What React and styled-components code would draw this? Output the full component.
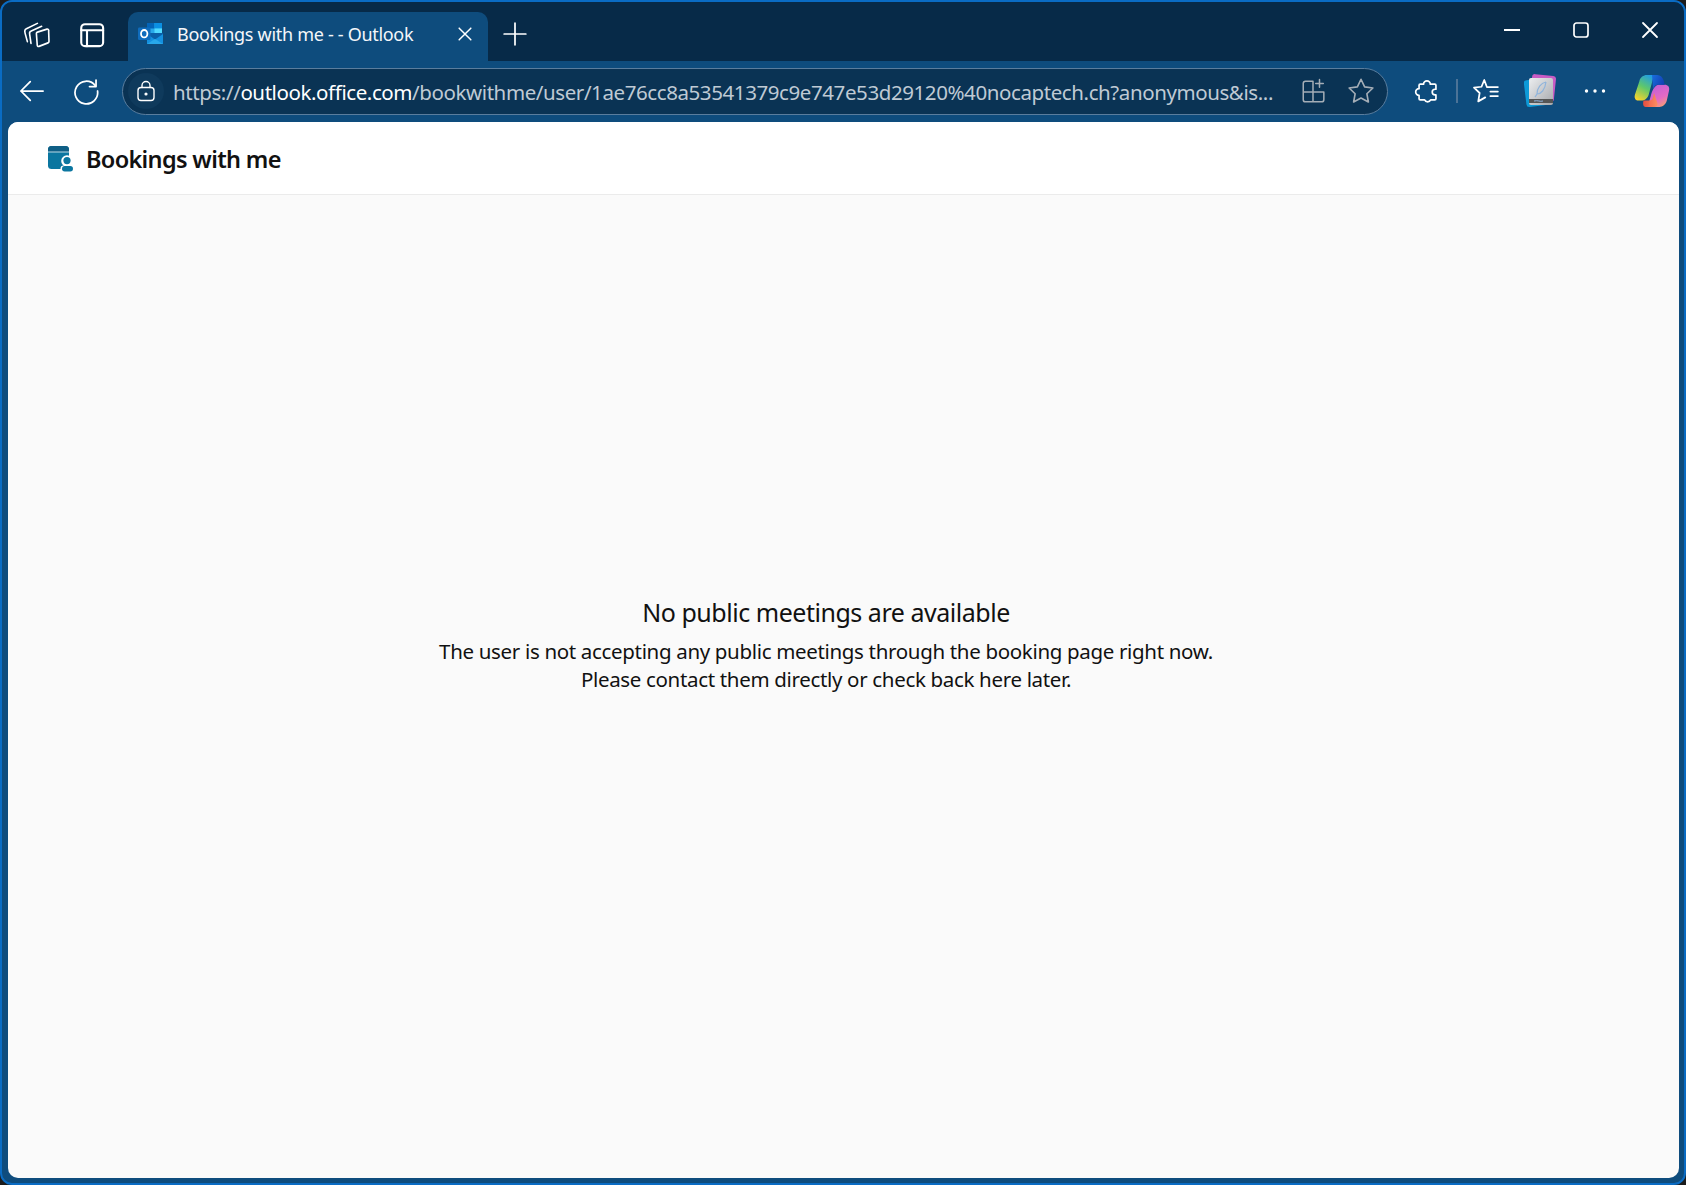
import React from "react";
import styled, { createGlobalStyle } from "styled-components";

const Global = createGlobalStyle`
  html, body { margin: 0; padding: 0; background: #1c1c1c; }
  * { box-sizing: border-box; }
  body { font-family: "Noto Sans", "Open Sans", sans-serif; }
`;

const Win = styled.div`
  width: 1686px; height: 1185px; border: 2px solid #0a6cc4; border-radius: 12px;
  background: #0e4c7d; display: flex; flex-direction: column; overflow: hidden;
`;
const TabStrip = styled.div`
  height: 59px; background: #072a48; display: flex; align-items: flex-end; padding-left: 8px;
  flex: none;
`;
const StripBtn = styled.div`
  width: 54px; height: 49px; padding-bottom: 5px; display: flex; align-items: center; justify-content: center; color: #fff; flex: none;
`;
const Tab = styled.div`
  width: 360px; height: 49px; margin-left: 10px; background: #0e4c7d; border-radius: 10px 10px 0 0;
  display: flex; align-items: center; padding: 0 13px 5px 10px; color: #fff; flex: none;
`;
const TabTitle = styled.div`
  flex: 1; margin-left: 13px; font-size: 18px; letter-spacing: -0.3px; white-space: nowrap; color: #f4f7fa;
`;
const Spacer = styled.div` flex: 1; `;
const WinControls = styled.div`
  display: flex; align-self: stretch; align-items: center; padding-bottom: 3px;
`;
const WinBtn = styled.div`
  width: 69px; display: flex; justify-content: center; color: #fff;
`;
const NavBar = styled.div`
  height: 61px; flex: none; display: flex; align-items: center; padding: 0 6px 1px 3px; color: #fff;
`;
const NavBtn = styled.div`
  width: ${p => p.$w || 54}px; margin-left: ${p => p.$ml || 0}px; height: 44px; display: flex; align-items: center; justify-content: center; flex: none;
`;
const Omni = styled.div`
  width: 1266px; height: 47px; margin-left: 9px; border: 1.5px solid #5a7d9d; border-radius: 24px; background: #0a3354;
  display: flex; align-items: center; padding: 0 2px 0 5px; flex: none;
`;
const LockChip = styled.div`
  width: 36px; height: 36px; border-radius: 50%; background: #0f3a5c; display: flex; align-items: center; justify-content: center; flex: none;
`;
const Url = styled.div`
  flex: 1; min-width: 0; margin-left: 9px; padding-top: 2px; font-size: 20.5px; letter-spacing: -0.41px; white-space: nowrap; color: #bfcad4;
  b { font-weight: 400; color: #fff; }
`;
const OmniBtn = styled.div`
  width: 48px; display: flex; justify-content: center; flex: none; color: #a4adb6;
`;
const Sep = styled.div`
  width: 2px; height: 24px; background: #4c7397; margin: 0 2px 0 1px; flex: none;
`;
const Page = styled.div`
  flex: 1; margin: 0 5px 5px 6px; background: #fafafa; border-radius: 10px; overflow: hidden; display: flex; flex-direction: column;
`;
const AppHeader = styled.header`
  height: 73px; background: #fff; border-bottom: 1.5px solid #ebebeb; display: flex; align-items: center; padding: 2px 0 0 40px; gap: 12px; flex: none;
`;
const AppTitle = styled.div`
  font-size: 23.5px; font-weight: 600; color: #111; letter-spacing: -0.67px;
`;
const Empty = styled.main`
  flex: 1; display: flex; flex-direction: column; align-items: center; padding: 399px 35px 0 0; color: #111;
`;
const Heading = styled.div`
  font-size: 25px; letter-spacing: -0.47px; line-height: 36px; margin-bottom: 7px;
`;
const Para = styled.div`
  font-size: 20.5px; letter-spacing: -0.33px; line-height: 28px; text-align: center;
`;

const Stroke = ({ size = 24, sw = 1.6, children, vb = 24 }) => (
  <svg width={size} height={size} viewBox={`0 0 ${vb} ${vb}`} fill="none" stroke="currentColor" strokeWidth={sw} strokeLinecap="round" strokeLinejoin="round">{children}</svg>
);

const Collections = () => (
  <Stroke size={30} sw={1.3}>
    <path d="M4.300 18.100 2.500 11.500c-.4-1.500-.2-3.300 1-3.700L12.300 3.500" />
    <path d="M7.200 19.500 6.100 12c-.3-1.500.2-2 1.300-2.400L15.700 5.800" />
    <path d="M11.500 11.500c0-.5.300-.9.800-1L20 8.100c.8-.2 1.300.2 1.300 1l.3 8.900c0 .5-.3.900-.8 1.100l-7.200 2.800c-.8.300-1.300-.1-1.400-.9z" />
  </Stroke>
);
const VerticalTabs = () => (
  <Stroke size={30} sw={1.7}><rect x="4.200" y="4.200" width="17.500" height="17.500" rx="3" /><path d="M4.200 9h17.500M8.800 9v12.700" /></Stroke>
);
const OutlookLogo = () => (
  <svg width="26" height="24" viewBox="0 0 26 24">
    <rect x="9" y="1" width="15" height="11" fill="#28a8ea" />
    <rect x="9" y="1" width="7.500" height="5.500" fill="#0364b8" />
    <rect x="16.500" y="1" width="7.500" height="5.500" fill="#0a8fe3" />
    <rect x="16.500" y="6.500" width="7.500" height="5.500" fill="#50d9ff" />
    <path d="M9 12h16v10H9z" fill="#1490df" />
    <path d="M9 12l8 5.500 8-5.500v-1H9z" fill="#0a5fa8" />
    <path d="M9 22l8-5 8 5z" fill="#28a8ea" />
    <rect x="0" y="5.500" width="12.500" height="12.500" rx="1.200" fill="#0f6cbd" />
    <ellipse cx="6.200" cy="11.700" rx="3.200" ry="3.700" fill="none" stroke="#fff" strokeWidth="1.800" />
  </svg>
);
const Close = ({ size = 20, sw = 1.8 }) => (
  <Stroke size={size} sw={sw}><path d="M5 5l14 14M19 5 5 19" /></Stroke>
);
const Plus = () => <Stroke size={26} sw={1.6}><path d="M12 2v20M2 12h20" /></Stroke>;
const Minimize = () => <svg width="16" height="3" viewBox="0 0 16 3"><rect width="16" height="2" fill="#fff" /></svg>;
const Maximize = () => <svg width="16" height="16" viewBox="0 0 16 16" fill="none" stroke="#fff" strokeWidth="1.700"><rect x="1" y="1" width="14" height="14" rx="2.500" /></svg>;
const Back = () => <Stroke size={28} sw={1.5}><path d="M21.500 12H2.500M10.500 4l-8 8 8 8" /></Stroke>;
const Refresh = () => <Stroke size={28} sw={1.5}><path d="M19.800 7.200a9.700 9.700 0 1 0 2.100 4.800" /><path d="M20.600 2.600v5.600H15" /></Stroke>;
const Lock = () => <Stroke size={24} sw={1.4}><rect x="4" y="8.500" width="16" height="13" rx="3" /><path d="M8 8.500V6.500a4 4 0 0 1 8 0v2" /><circle cx="12" cy="15" r=".9" fill="currentColor" /></Stroke>;
const Split = () => <Stroke size={26} sw={1.4}><path d="M12 3H5a2 2 0 0 0-2 2v15a2 2 0 0 0 2 2h15a2 2 0 0 0 2-2v-7H3M12 3v19" /><path d="M18 1.500v7M14.500 5h7" /></Stroke>;
const Star = () => <Stroke size={30} sw={1.300}><path d="M12 2.600l2.900 6.100 6.600.9-4.800 4.600 1.200 6.600L12 17.600l-5.900 3.200 1.200-6.600-4.800-4.600 6.600-.9z" /></Stroke>;
const Puzzle = () => <Stroke size={27} sw={1.500}><path d="M11.500 2.500a3 3 0 0 1 3 3h4a1 1 0 0 1 1 1v3.500h-.8a2.500 2.500 0 0 0 0 5h.8v3.500a1 1 0 0 1-1 1h-3.700a3 3 0 0 1-5.400 0H5.500a1 1 0 0 1-1-1V15.500a3 3 0 0 1 0-6V6.500a1 1 0 0 1 1-1h3a3 3 0 0 1 3-3z" /></Stroke>;
const Favorites = () => <Stroke size={30} sw={1.400}><path d="M21.500 8.800h-8.800L10.600 3.200 8.400 8.600l-6 .7 4.500 4.300-1.100 6.700 5.600-3.200" /><path d="M15.500 12.400h6M15.500 16h6" /></Stroke>;
const BookApp = () => (
  <svg width="32" height="34" viewBox="0 0 32 34">
    <defs><linearGradient id="bk" x1="0" y1="0" x2="1" y2="1"><stop offset="0" stopColor="#eceef0" /><stop offset="1" stopColor="#a6a8ac" /></linearGradient></defs>
    <rect x="7" y="1" width="24" height="26" rx="3" fill="#c85cc4" transform="rotate(6 19 14)" />
    <rect x="1" y="5" width="24" height="27" rx="3" fill="#0d9ad8" transform="rotate(-7 13 18)" />
    <rect x="5" y="4" width="24" height="27" rx="2" fill="url(#bk)" />
    <rect x="5" y="25" width="24" height="4" fill="#555" />
    <path d="M22 8c-5 1-9 6-9 12l-2 3M13 20c4 0 8-4 9-12" stroke="#8fb4dc" strokeWidth="1.200" fill="none" />
    <path d="M10 27c4-1 6 1 9 0" stroke="#8fb4dc" strokeWidth="1" fill="none" />
  </svg>
);
const Dots = () => (
  <svg width="22" height="4" viewBox="0 0 22 4" fill="#fff"><circle cx="2.500" cy="2" r="1.700" /><circle cx="11" cy="2" r="1.700" /><circle cx="19.500" cy="2" r="1.700" /></svg>
);
const Copilot = () => (
  <svg width="36" height="34" viewBox="0 0 34 32">
    <defs>
      <linearGradient id="cl" x1="0.7" y1="0" x2="0.2" y2="1"><stop offset="0" stopColor="#1f9be8" /><stop offset=".5" stopColor="#5fc86a" /><stop offset="1" stopColor="#f6d32d" /></linearGradient>
      <linearGradient id="cr" x1="0.3" y1="0" x2="0.8" y2="1"><stop offset="0" stopColor="#c05fd8" /><stop offset=".6" stopColor="#e46ac4" /><stop offset="1" stopColor="#f7a36c" /></linearGradient>
      <linearGradient id="ct" x1="0" y1="0" x2="1" y2="0.5"><stop offset="0" stopColor="#1a6fdc" /><stop offset="1" stopColor="#123fb4" /></linearGradient>
      <linearGradient id="cb" x1="0" y1="0" x2="1" y2="0"><stop offset="0" stopColor="#f24e3d" /><stop offset="1" stopColor="#f9905d" /></linearGradient>
    </defs>
    <path d="M12 1h10c-3 1-4 3-5 7l-3 11c-1 4-4 6-7 6H4c-3 0-4-3-3-6L5 7c1-4 4-6 7-6z" fill="url(#cl)" />
    <path d="M14 27l2-7c1-4 3-9 7-10h6c3 0 5 2 4 6l-2 9c-1 4-4 6-7 6H13c1-1 1-2 1-4z" fill="url(#cr)" />
    <path d="M17 1h5c3 0 5 2 6 5l1 4h-6c-3 0-4 2-5 4z" fill="url(#ct)" />
    <path d="M9 25h6c3 0 3-4 4-7l3 9c1 3-1 4-3 4h-8c-2 0-3-2-2-6z" fill="url(#cb)" opacity=".95" />
  </svg>
);
const BookingsIcon = () => (
  <svg width="26" height="26" viewBox="0 0 26 26">
    <rect x="0" y="0" width="21" height="23" rx="3.500" fill="#0b76a0" />
    <path d="M0 6V3.500A3.500 3.500 0 0 1 3.500 0h14A3.500 3.500 0 0 1 21 3.500V6z" fill="#0f5f86" />
    <rect x="0" y="5.500" width="21" height="1" fill="#bcd9e6" />
    <circle cx="19" cy="15" r="5.800" fill="#fff" />
    <circle cx="19" cy="14.600" r="3.600" fill="#0b76a0" />
    <rect x="12.500" y="19.500" width="13" height="6.500" rx="3" fill="#fff" />
    <rect x="14" y="20" width="11" height="5.500" rx="2.700" fill="#0b76a0" />
  </svg>
);

export default function App() {
  return (
    <>
      <Global />
      <Win>
        <TabStrip>
          <StripBtn><Collections /></StripBtn>
          <StripBtn><VerticalTabs /></StripBtn>
          <Tab>
            <OutlookLogo />
            <TabTitle>Bookings with me - - Outlook</TabTitle>
            <Close />
          </Tab>
          <StripBtn><Plus /></StripBtn>
          <Spacer />
          <WinControls>
            <WinBtn><Minimize /></WinBtn>
            <WinBtn><Maximize /></WinBtn>
            <WinBtn><Close size={24} /></WinBtn>
          </WinControls>
        </TabStrip>
        <NavBar>
          <NavBtn><Back /></NavBtn>
          <NavBtn><Refresh /></NavBtn>
          <Omni>
            <LockChip><Lock /></LockChip>
            <Url>https://<b>outlook.office.com</b>/bookwithme/user/1ae76cc8a53541379c9e747e53d29120%40nocaptech.ch?anonymous&amp;is...</Url>
            <OmniBtn><Split /></OmniBtn>
            <OmniBtn><Star /></OmniBtn>
          </Omni>
          <NavBtn $w={56} $ml={11}><Puzzle /></NavBtn>
          <Sep />
          <NavBtn $w={52}><Favorites /></NavBtn>
          <NavBtn $w={56}><BookApp /></NavBtn>
          <NavBtn><Dots /></NavBtn>
          <NavBtn $ml={3}><Copilot /></NavBtn>
        </NavBar>
        <Page>
          <AppHeader>
            <BookingsIcon />
            <AppTitle>Bookings with me</AppTitle>
          </AppHeader>
          <Empty>
            <Heading>No public meetings are available</Heading>
            <Para>The user is not accepting any public meetings through the booking page right now.<br />Please contact them directly or check back here later.</Para>
          </Empty>
        </Page>
      </Win>
    </>
  );
}
